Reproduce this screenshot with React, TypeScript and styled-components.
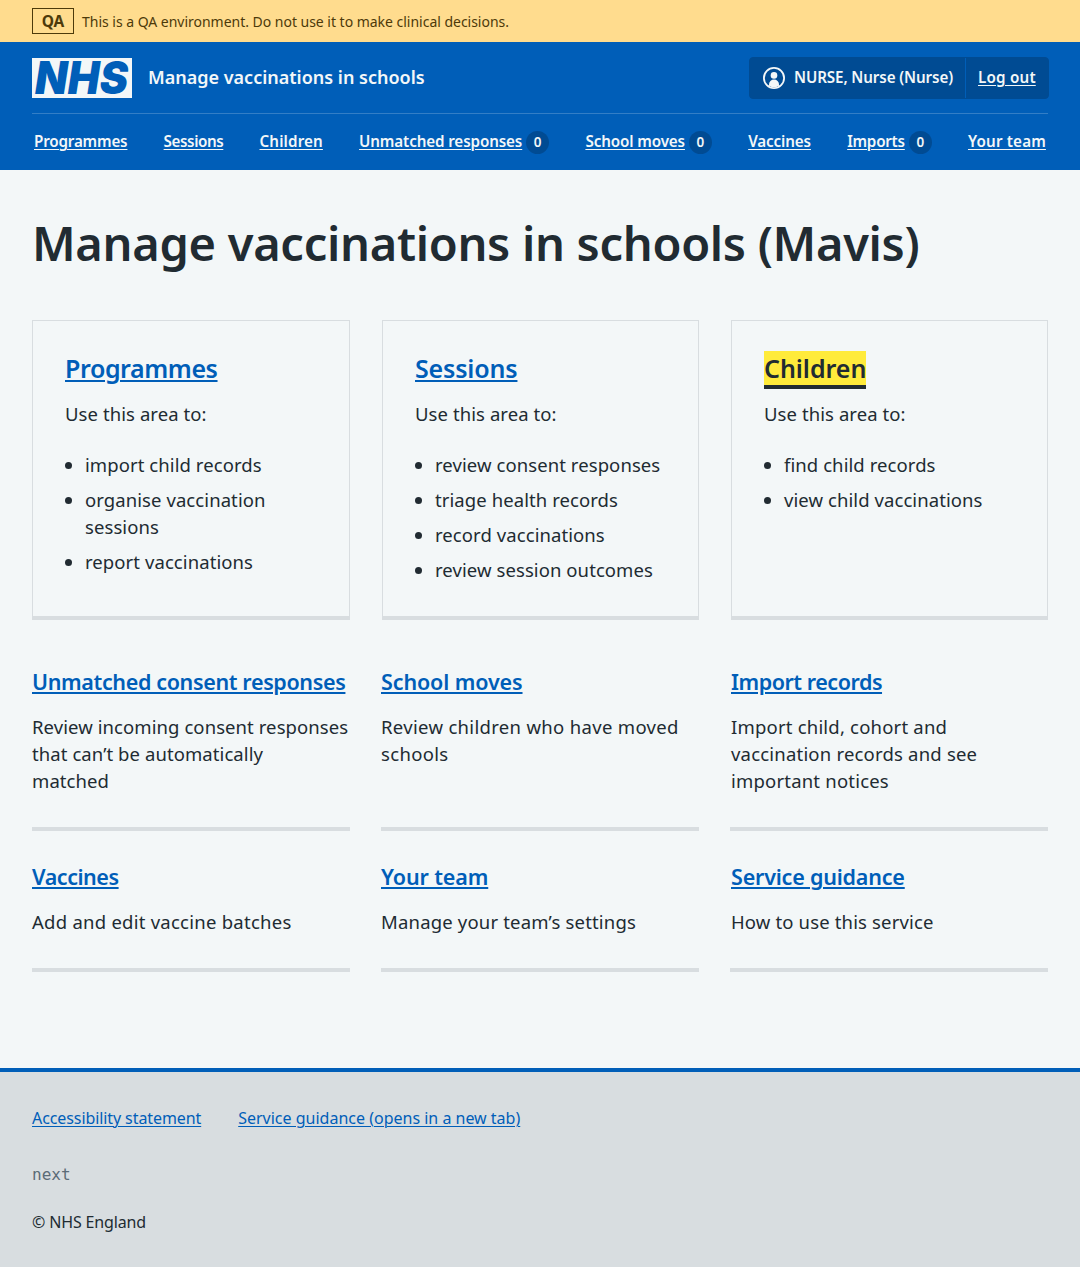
import React from "react";
import styled, { createGlobalStyle } from "styled-components";

const color = {
  blue: "#005eb8",
  blueDark: "#004b93",
  page: "#f3f7f8",
  text: "#212b32",
  muted: "#5b6b77",
  border: "#d8dde0",
  focus: "#ffeb3b",
  banner: "#ffdc8e",
  bannerText: "#4d3a0a",
};

const GlobalStyle = createGlobalStyle`
  *, *::before, *::after { box-sizing: border-box; }
  body {
    margin: 0;
    background: ${color.border};
    color: ${color.text};
    font-family: "Noto Sans", "Open Sans", sans-serif;
    font-size: 18.5px;
    line-height: 27px;
    letter-spacing: 0.08px;
  }
  h1, h2, p, ul { margin: 0; padding: 0; font-weight: 400; }
  ul { list-style: none; }
`;

const EnvironmentBanner = styled.div`
  display: flex;
  align-items: center;
  gap: 8px;
  height: 42px;
  padding: 0 32px;
  background: ${color.banner};
  color: ${color.bannerText};
  font-size: 14px;
  line-height: 20px;
  letter-spacing: -0.02px;
`;

const EnvironmentTag = styled.strong`
  width: 42px;
  height: 26px;
  border: 1px solid currentColor;
  font-size: 15.5px;
  font-weight: 700;
  line-height: 24px;
  text-align: center;
`;

const EnvironmentText = styled.span`
  padding-top: 1px;
`;

const Header = styled.header`
  height: 128px;
  padding: 0 32px;
  background: ${color.blue};
  color: ${color.page};
`;

const HeaderTop = styled.div`
  display: flex;
  align-items: center;
  height: 72px;
  border-bottom: 1px solid rgba(255, 255, 255, 0.2);
`;

const Logo = styled.svg`
  display: block;
  flex: none;
  width: 100px;
  height: 40px;
  overflow: visible;
`;

const ServiceName = styled.span`
  margin-left: 16px;
  padding-bottom: 1px;
  font-size: 18px;
  font-weight: 600;
  letter-spacing: 0;
`;

const Account = styled.div`
  display: flex;
  align-items: center;
  width: 300px;
  height: 42px;
  margin: 0 -1px 0 auto;
  border: 1px solid ${color.blueDark};
  border-radius: 4px;
  background: ${color.blueDark};
  font-size: 15.2px;
  font-weight: 600;
  letter-spacing: -0.12px;
`;

const AccountUser = styled.div`
  display: flex;
  align-items: center;
  gap: 9px;
  width: 216px;
  height: 40px;
  padding-left: 13px;
  border-right: 1px solid ${color.blue};
  white-space: nowrap;
`;

const AccountIcon = styled.svg`
  flex: none;
  width: 22px;
  height: 22px;
`;

const HeaderLink = styled.a<{ $tracking?: number }>`
  color: inherit;
  text-decoration: underline;
  text-decoration-thickness: 1px;
  text-underline-offset: 2px;
  letter-spacing: ${(p) => p.$tracking ?? -0.12}px;
  white-space: nowrap;
`;

const LogOut = styled(HeaderLink)`
  margin-left: 12px;
`;

const Nav = styled.ul`
  display: flex;
  justify-content: space-between;
  height: 56px;
  padding: 0 2px;
  font-size: 15.2px;
  font-weight: 600;
`;

const NavItem = styled.li`
  display: flex;
  align-items: center;
  gap: 4px;

  > a {
    padding-bottom: 1px;
  }
`;

const Count = styled.span`
  width: 23px;
  height: 23px;
  border-radius: 50%;
  background: ${color.blueDark};
  font-size: 13.5px;
  font-weight: 600;
  line-height: 23px;
  letter-spacing: 0;
  text-align: center;
`;

const Main = styled.main`
  height: 898px;
  padding: 48px 32px 0;
  background: ${color.page};
`;

const Title = styled.h1`
  height: 102px;
  font-size: 47px;
  font-weight: 600;
  line-height: 50px;
  letter-spacing: -0.29px;
`;

const Cards = styled.div`
  display: grid;
  grid-template-columns: 318px 317px 317px;
  gap: 32px;
`;

const Card = styled.section`
  height: 300px;
  padding: 32px;
  border: 1px solid ${color.border};
  border-bottom-width: 4px;
`;

const CardHeading = styled.h2<{ $tracking?: number }>`
  margin-bottom: 16px;
  font-size: 25px;
  font-weight: 600;
  line-height: 31px;
  letter-spacing: ${(p) => p.$tracking ?? -0.42}px;
`;

const BlockLink = styled.a<{ $focused?: boolean }>`
  color: ${(p) => (p.$focused ? color.text : color.blue)};
  background: ${(p) => (p.$focused ? color.focus : "transparent")};
  box-shadow: ${(p) => (p.$focused ? `0 4px ${color.text}` : "none")};
  text-decoration: ${(p) => (p.$focused ? "none" : "underline")};
  text-decoration-thickness: 0.075em;
  text-underline-offset: 2px;
`;

const TaskList = styled.ul`
  margin-top: 24px;
  padding-left: 20px;
  list-style: disc;

  li + li {
    margin-top: 8px;
  }
`;

const Areas = styled.div`
  display: grid;
  grid-template-columns: repeat(3, 318px);
  gap: 31px;
  margin-top: 47px;
`;

const Area = styled.section`
  padding-bottom: 33px;
  border-bottom: 4px solid ${color.border};

  &:nth-child(3n) {
    padding-left: 1px;
  }
`;

const AreaHeading = styled.h2<{ $tracking?: number }>`
  margin-bottom: 16px;
  font-size: 21.5px;
  font-weight: 600;
  line-height: 30px;
  letter-spacing: ${(p) => p.$tracking ?? -0.36}px;
  white-space: nowrap;
`;

const AreaText = styled.p<{ $tracking?: number }>`
  letter-spacing: ${(p) => p.$tracking ?? 0.08}px;
  white-space: pre-line;
`;

const Footer = styled.footer`
  height: 199px;
  padding: 32px 32px 0;
  border-top: 4px solid ${color.blue};
  background: ${color.border};
  font-size: 16px;
  line-height: 28px;
  letter-spacing: 0;
`;

const FooterLinks = styled.div`
  display: flex;
  gap: 37px;
`;

const FooterLink = styled.a<{ $tracking?: number }>`
  color: ${color.blue};
  text-decoration: underline;
  text-decoration-thickness: 1px;
  text-underline-offset: 2px;
  letter-spacing: ${(p) => p.$tracking ?? 0}px;
`;

const Version = styled.p`
  margin-top: 29px;
  color: ${color.muted};
  font-family: "DejaVu Sans Mono", monospace;
`;

const Copyright = styled.p`
  margin-top: 19px;
  letter-spacing: -0.14px;
`;

const navItems: { label: string; count?: number; tracking?: number }[] = [
  { label: "Programmes", tracking: -0.18 },
  { label: "Sessions", tracking: -0.42 },
  { label: "Children", tracking: 0.13 },
  { label: "Unmatched responses", count: 0 },
  { label: "School moves", count: 0 },
  { label: "Vaccines" },
  { label: "Imports", count: 0, tracking: -0.24 },
  { label: "Your team", tracking: 0.16 },
];

const cards: { title: string; tracking?: number; focused?: boolean; tasks: string[] }[] = [
  {
    title: "Programmes",
    tasks: ["import child records", "organise vaccination sessions", "report vaccinations"],
  },
  {
    title: "Sessions",
    tracking: -0.17,
    tasks: [
      "review consent responses",
      "triage health records",
      "record vaccinations",
      "review session outcomes",
    ],
  },
  {
    title: "Children",
    tracking: -0.04,
    focused: true,
    tasks: ["find child records", "view child vaccinations"],
  },
];

const areas: { title: string; tracking?: number; text: string; textTracking?: number }[] = [
  {
    title: "Unmatched consent responses",
    text: "Review incoming consent responses\nthat can’t be automatically\nmatched",
  },
  {
    title: "School moves",
    tracking: -0.12,
    text: "Review children who have moved\nschools",
    textTracking: 0.32,
  },
  {
    title: "Import records",
    tracking: -0.46,
    text: "Import child, cohort and\nvaccination records and see\nimportant notices",
    textTracking: 0.2,
  },
  {
    title: "Vaccines",
    tracking: -0.46,
    text: "Add and edit vaccine batches",
    textTracking: 0.25,
  },
  {
    title: "Your team",
    tracking: -0.12,
    text: "Manage your team’s settings",
    textTracking: 0.18,
  },
  {
    title: "Service guidance",
    tracking: -0.2,
    text: "How to use this service",
    textTracking: 0.15,
  },
];

export default function App() {
  return (
    <>
      <GlobalStyle />
      <EnvironmentBanner>
        <EnvironmentTag>QA</EnvironmentTag>
        <EnvironmentText>
          This is a QA environment. Do not use it to make clinical decisions.
        </EnvironmentText>
      </EnvironmentBanner>
      <Header>
        <HeaderTop>
          <Logo viewBox="0 0 100 40" role="img" aria-label="NHS">
            <rect width="100" height="40" fill={color.page} />
            <text
              x="3"
              y="36.3"
              fill={color.blue}
              fontFamily="Inter"
              fontStyle="italic"
              fontWeight="900"
              fontSize="45"
              textLength="93"
              lengthAdjust="spacingAndGlyphs"
            >
              NHS
            </text>
          </Logo>
          <ServiceName>Manage vaccinations in schools</ServiceName>
          <Account>
            <AccountUser>
              <AccountIcon viewBox="0 0 22 22" fill="currentColor" aria-hidden="true">
                <circle cx="11" cy="11" r="10.1" fill="none" stroke="currentColor" strokeWidth="1.8" />
                <circle cx="11" cy="8.4" r="3.3" />
                <path d="M6 18.8v-1.6a5 4.6 0 0 1 10 0v1.6A9.4 9.4 0 0 1 6 18.8z" />
              </AccountIcon>
              <span>NURSE, Nurse (Nurse)</span>
            </AccountUser>
            <LogOut $tracking={0.2}>Log out</LogOut>
          </Account>
        </HeaderTop>
        <Nav>
          {navItems.map((item) => (
            <NavItem key={item.label}>
              <HeaderLink $tracking={item.tracking}>{item.label}</HeaderLink>
              {item.count !== undefined && <Count>{item.count}</Count>}
            </NavItem>
          ))}
        </Nav>
      </Header>
      <Main>
        <Title>Manage vaccinations in schools (Mavis)</Title>
        <Cards>
          {cards.map((card) => (
            <Card key={card.title}>
              <CardHeading $tracking={card.tracking}>
                <BlockLink $focused={card.focused}>{card.title}</BlockLink>
              </CardHeading>
              <p>Use this area to:</p>
              <TaskList>
                {card.tasks.map((task) => (
                  <li key={task}>{task}</li>
                ))}
              </TaskList>
            </Card>
          ))}
        </Cards>
        <Areas>
          {areas.map((area) => (
            <Area key={area.title}>
              <AreaHeading $tracking={area.tracking}>
                <BlockLink>{area.title}</BlockLink>
              </AreaHeading>
              <AreaText $tracking={area.textTracking}>{area.text}</AreaText>
            </Area>
          ))}
        </Areas>
      </Main>
      <Footer>
        <FooterLinks>
          <FooterLink $tracking={-0.09}>Accessibility statement</FooterLink>
          <FooterLink>Service guidance (opens in a new tab)</FooterLink>
        </FooterLinks>
        <Version>next</Version>
        <Copyright>© NHS England</Copyright>
      </Footer>
    </>
  );
}
